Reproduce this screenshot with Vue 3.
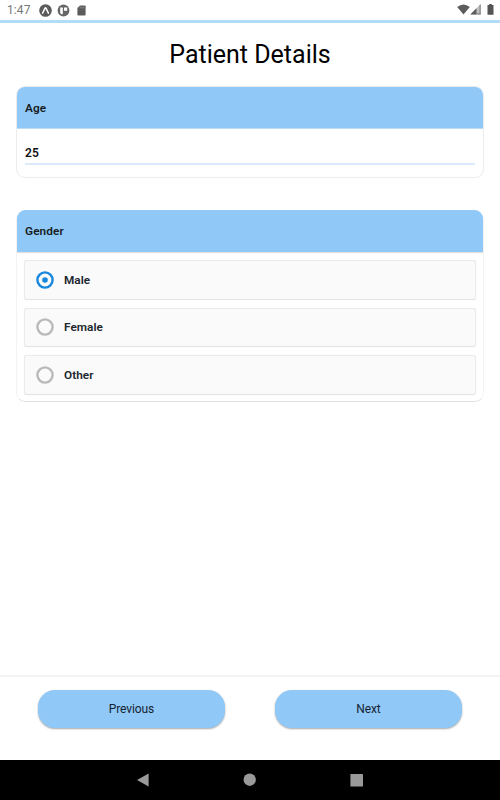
<script setup>
import { ref } from 'vue'

const age = ref('25')
const options = ['Male', 'Female', 'Other']
const selected = ref('Male')
</script>

<template>
  <div class="screen">
    <header class="status">
      <span class="time">1:47</span>
      <svg class="icon expo" viewBox="0 0 13 13">
        <circle cx="6.5" cy="6.5" r="6.3" fill="#5b5b5b" />
        <path d="M3.6 9.1 6 4.1Q6.5 3.3 7 4.1L9.4 9.1" fill="none" stroke="#fff" stroke-width="1.5" stroke-linecap="round" />
      </svg>
      <svg class="icon parking" viewBox="0 0 13 13">
        <circle cx="6.5" cy="6.5" r="5.9" fill="#666" />
        <path d="M3.2 3.4h2.6v6.8H4.6L3.2 9zM7 3.4h3.2v3.4H7z" fill="#fff" />
      </svg>
      <svg class="icon sd" viewBox="0 0 9 11">
        <path d="M3 .4h4.7q.9 0 .9.9v8.3q0 .9-.9.9H1.3q-.9 0-.9-.9V3z" fill="#5c5c5c" />
        <path d="M3.2 1.7v1.7M5 1.7v1.7M6.8 1.7v1.7" stroke="#999" stroke-width=".8" />
      </svg>
      <span class="spacer"></span>
      <svg class="icon wifi" viewBox="0 0 13 11">
        <path d="M.2 3Q6.5-2 12.8 3L6.5 10.6z" fill="#5c5c5c" />
      </svg>
      <svg class="icon signal" viewBox="0 0 11 11">
        <path d="M.3 10.5 10.5.3v10.2z" fill="#c0c0c0" />
        <path d="M.3 10.5 6.5 4.3v6.2zM10.5.3v10.2h-.8V1.1z" fill="#5c5c5c" />
        <path d="M6.5 9.9h4" stroke="#777" />
      </svg>
      <svg class="icon battery" viewBox="0 0 7 11">
        <path d="M2.2 0h2.6v1h1.7v9.7H.5V1h1.7z" fill="#555" />
      </svg>
    </header>

    <main class="content">
      <h1>Patient Details</h1>

      <section class="card age-card">
        <h2>Age</h2>
        <div class="field"><div class="value">{{ age }}</div></div>
      </section>

      <section class="card gender-card">
        <h2>Gender</h2>
        <div class="options">
          <div v-for="o in options" :key="o" class="option" @click="selected = o">
            <svg class="radio" :class="{ on: selected === o }" viewBox="0 0 18 18">
              <circle class="ring" cx="9" cy="9" r="7.6" />
              <circle v-if="selected === o" class="dot" cx="9" cy="9" r="2.8" />
            </svg>
            <span>{{ o }}</span>
          </div>
        </div>
      </section>
    </main>

    <footer class="actions">
      <button type="button">Previous</button>
      <button type="button">Next</button>
    </footer>

    <nav class="navbar">
      <svg viewBox="0 0 14 14"><path d="M1 7 12.6.4v13.2z" /></svg>
      <svg viewBox="0 0 14 14"><circle cx="6.7" cy="6.7" r="6.2" /></svg>
      <svg viewBox="0 0 14 14"><rect x=".4" y=".9" width="12.6" height="12.6" rx=".5" /></svg>
    </nav>
  </div>
</template>

<style>
body {
  background: #fff;
}
</style>

<style scoped>
.screen {
  width: 500px;
  height: 800px;
  display: flex;
  flex-direction: column;
  overflow: hidden;
  background: #fff;
  font-family: Roboto, sans-serif;
  color: #111;
}

.status {
  box-sizing: border-box;
  height: 23px;
  border-bottom: 3px solid #b3dcfb;
  display: flex;
  align-items: center;
  padding: 0 6px 0 7px;
}

.time {
  width: 31.5px;
  font-size: 12px;
  line-height: 20px;
  letter-spacing: 0.1px;
  color: #777;
}

.icon {
  display: block;
  flex: none;
}

.expo,
.parking {
  width: 13px;
  height: 13px;
}

.parking {
  margin-left: 5px;
}

.sd {
  width: 9px;
  height: 11px;
  margin-left: 7.5px;
}

.spacer {
  flex: 1;
}

.wifi {
  width: 13px;
  height: 11px;
  margin-top: -2px;
}

.signal {
  width: 11px;
  height: 11px;
  margin: -1px 6px 0 0;
}

.battery {
  width: 7px;
  height: 11px;
  margin-top: -2px;
}

.content {
  flex: 1;
  padding: 0 16px;
}

h1 {
  margin: 16px 0 15px;
  font-size: 25px;
  line-height: 32px;
  font-weight: 400;
  text-align: center;
  color: #000;
}

.card {
  box-sizing: border-box;
  border: 1px solid #ececee;
  border-radius: 9px;
  overflow: hidden;
}

.age-card {
  height: 92px;
  margin-bottom: 32px;
}

.gender-card {
  height: 192px;
  border-color: #fff #f3f3f3 #e2e2e2;
  border-top: 0;
}

h2 {
  box-sizing: border-box;
  margin: 0;
  height: 42px;
  padding-left: 8px;
  background: #90c9f8;
  border-bottom: 1px solid #bbdaf3;
  font-size: 11.8px;
  line-height: 43px;
  font-weight: 600;
  letter-spacing: 0.1px;
  color: #171d23;
}

.gender-card h2 {
  box-shadow: 0 1px 1px rgba(0, 0, 0, 0.12);
  border-bottom: 0;
}

.field {
  padding: 15px 8px 0;
}

.value {
  height: 19px;
  border-bottom: 2px solid #dbeafb;
  font-size: 12px;
  line-height: 19px;
  font-weight: 600;
  letter-spacing: 0.2px;
}

.options {
  display: flex;
  flex-direction: column;
  gap: 8px;
  padding: 8px 7px 0;
}

.option {
  box-sizing: border-box;
  height: 39.5px;
  display: flex;
  align-items: center;
  gap: 10px;
  padding-left: 11px;
  background: #fafafa;
  border: 1px solid #ebebeb;
  border-bottom-color: #e3e3e3;
  border-radius: 3px;
  box-shadow: 0 0 1px rgba(0, 0, 0, 0.1);
  font-size: 11.8px;
  font-weight: 600;
  letter-spacing: 0.05px;
  color: #20262d;
}

.radio {
  width: 18px;
  height: 18px;
}

.ring {
  fill: none;
  stroke: #bababa;
  stroke-width: 2.4;
}

.on .ring {
  stroke: #1687dc;
}

.dot {
  fill: #1687dc;
}

.actions {
  box-sizing: border-box;
  height: 85px;
  border-top: 2px solid #f3f3f3;
  display: flex;
  gap: 50px;
  padding: 13px 38px 0;
}

button {
  flex: 1;
  height: 37.5px;
  padding: 1px 0 0;
  border: 0;
  border-radius: 17px;
  background: #90c9f8;
  box-shadow: 0 1px 2px rgba(0, 0, 0, 0.35);
  font-family: inherit;
  font-size: 12px;
  letter-spacing: -0.1px;
  color: #142230;
}

.navbar {
  height: 40px;
  background: #000;
  display: flex;
  justify-content: center;
  align-items: center;
  gap: 93px;
}

.navbar svg {
  width: 14px;
  height: 14px;
  fill: #999;
}
</style>
